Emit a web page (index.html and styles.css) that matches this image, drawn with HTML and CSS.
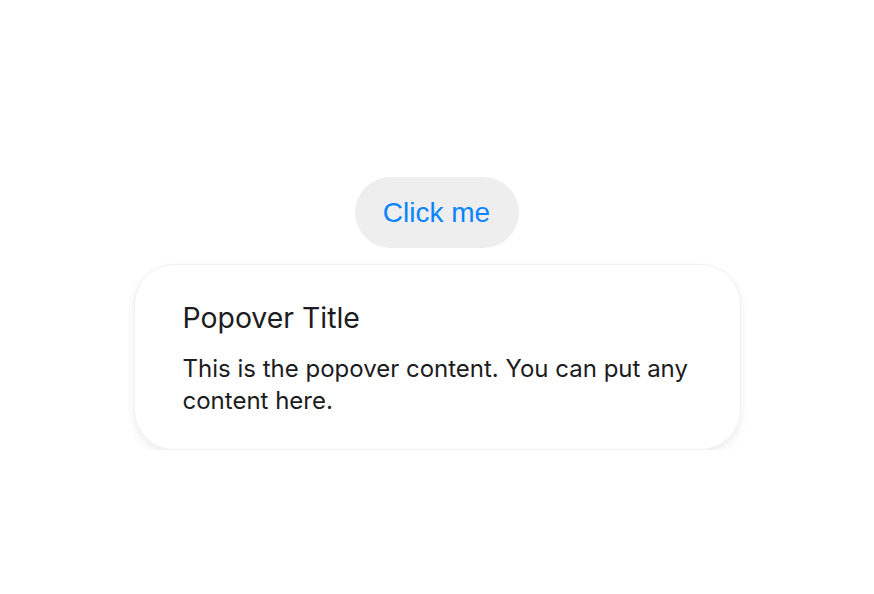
FILE: index.html
```html
<!DOCTYPE html>
<html>
<head>
<meta charset="utf-8">
<link rel="stylesheet" href="styles.css">
</head>
<body>
<main class="stage">
  <button class="trigger">Click me</button>
  <div class="popover">
    <h2 class="popover-title">Popover Title</h2>
    <p class="popover-body">This is the popover content. You can put any content here.</p>
  </div>
</main>
</body>
</html>
```
FILE: styles.css
```css
html, body {
  margin: 0;
  padding: 0;
  background: #ffffff;
}
.stage {
  display: flex;
  flex-direction: column;
  align-items: center;
  padding-top: 177px;
  gap: 16px;
}
.trigger {
  font-family: "Liberation Sans", Arial, sans-serif;
  font-size: 28px;
  line-height: 32px;
  color: #0a84ff;
  background: #eeeeee;
  border: none;
  border-radius: 36px;
  width: 164px;
  height: 71px;
  padding: 0 1px 0 0;
}
.popover {
  box-sizing: border-box;
  width: 607px;
  background: #ffffff;
  border: 1px solid #f1f1f1;
  border-radius: 40px;
  box-shadow: 0 4px 10px rgba(0, 0, 0, 0.07);
  padding: 35px 48px 32px;
  font-family: Inter, "Noto Sans", sans-serif;
  color: #1c1c1e;
}
.popover-title {
  margin: 0 0 17px;
  font-size: 28.4px;
  font-weight: 400;
  line-height: 36px;
}
.popover-body {
  margin: 0;
  font-size: 24px;
  line-height: 32px;
}
```
